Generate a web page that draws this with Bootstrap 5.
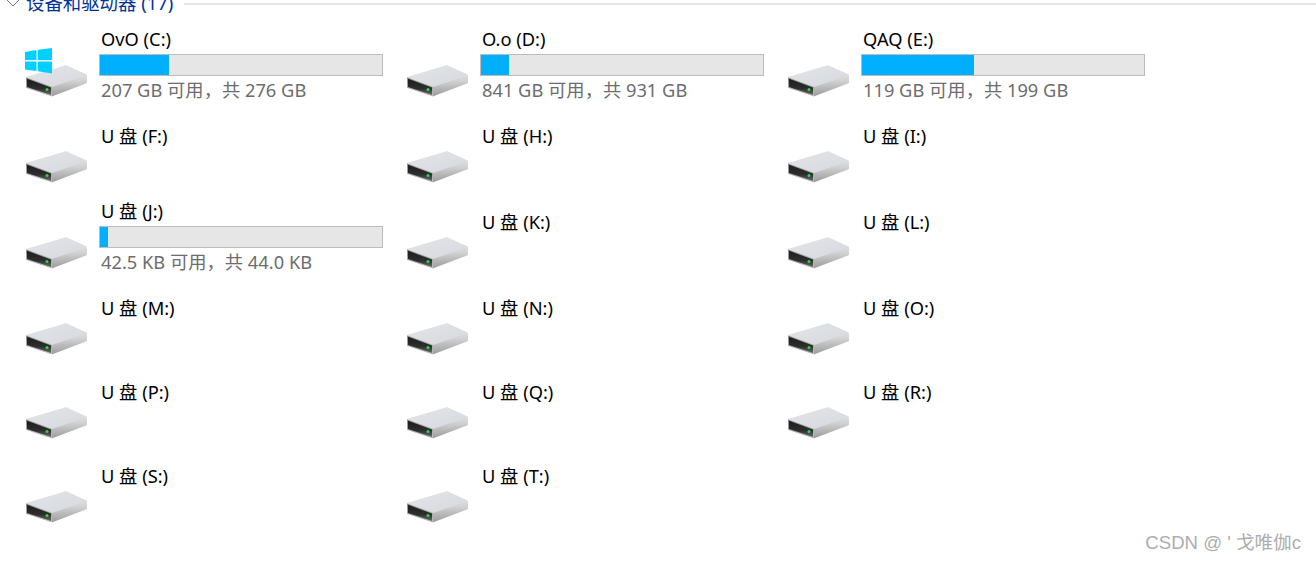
<!DOCTYPE html>
<html lang="zh-CN">
<head>
  <meta charset="UTF-8">
  <meta name="viewport" content="width=device-width,initial-scale=1">
  <title>设备和驱动器</title>
  <link href="https://cdn.jsdelivr.net/npm/bootstrap@5.3.0/dist/css/bootstrap.min.css" rel="stylesheet">
  <style>
    html, body { height: 100%; overflow: hidden; }
    body {
      background: #fff;
      color: #000;
      font-family: "Noto Sans", "Noto Sans CJK SC", sans-serif;
    }
    .group-head {
      height: 26px;
      margin-top: -10px;
      padding-left: 6px;
      color: #003399;
      font-size: 18.4px;
      line-height: 26px;
    }
    .group-head svg { width: 14px; height: 8px; margin-right: 6px; flex: none; }
    .group-rule { height: 2px; background: #e6e6e6; margin-left: 11px; margin-top: 1px; }
    .drive-grid {
      grid-template-columns: repeat(3, 381px);
      grid-template-rows: 86px 86px 86px 84px 84px 84px;
      margin-top: 10px;
    }
    .drive-tile { padding-left: 25px; }
    .drive-icon { width: 68px; height: 58px; margin-top: 13px; margin-right: -6px; flex: none; }
    .drive-text { width: 284px; margin-left: 12px; flex: none; }
    .drive-name {
      margin-left: 2px;
      font-size: 18.3px;
      line-height: 26px;
      white-space: nowrap;
    }
    .drive-tile.plain .drive-name { margin-top: 11px; }
    .drive-bar {
      height: 22px;
      margin-top: 2px;
      border: 1px solid #bcbcbc;
      border-radius: 0;
      background: #e6e6e6;
    }
    .drive-bar .progress-bar { background: #00b0ff; }
    .drive-free {
      margin: 1px 0 0 2px;
      color: #6d6d6d;
      font-size: 18.3px;
      line-height: 26px;
      white-space: nowrap;
    }
    .win-logo { left: 25px; top: 22px; z-index: 1; }
    .watermark {
      position: absolute;
      right: 15px;
      top: 531px;
      color: #adadad;
      font-family: "Liberation Sans", "Noto Sans CJK SC", sans-serif;
      font-size: 18.6px;
      line-height: 24px;
    }
  </style>
</head>
<body>

  <svg width="0" height="0" class="position-absolute">
    <defs>
      <linearGradient id="sideGrad" x1="0" y1="0" x2="0" y2="1">
        <stop offset="0" stop-color="#f0f0f0"/>
        <stop offset="0.5" stop-color="#d2d2d2"/>
        <stop offset="1" stop-color="#9c9c9c"/>
      </linearGradient>
      <linearGradient id="topGrad" x1="0" y1="0" x2="1" y2="1">
        <stop offset="0" stop-color="#e3e5e9"/>
        <stop offset="1" stop-color="#d5d8dd"/>
      </linearGradient>
      <linearGradient id="rimGrad" x1="0" y1="0" x2="0" y2="1">
        <stop offset="0" stop-color="#8a8a8a"/>
        <stop offset="1" stop-color="#c4c4c4"/>
      </linearGradient>
      <linearGradient id="faceGrad" x1="0" y1="0" x2="0" y2="1">
        <stop offset="0" stop-color="#1c1c1c"/>
        <stop offset="0.6" stop-color="#2e2e2e"/>
        <stop offset="1" stop-color="#6a6a6a"/>
      </linearGradient>
      <symbol id="hdd" viewBox="0 0 68 32">
        <path d="M1.5 12 L40 .5 Q41 0 42 .5 L61.5 9.5 Q62 10 62 11 L62 17 Q62 18 61 18.5 L28 31 Q27 31.500 26 31 L1.500 23 Q1 22.500 1 22 L1 13 Q1 12.500 1.500 12Z" fill="url(#sideGrad)"/>
        <polygon points="1.500,12 41,.3 62,10 27,22" fill="url(#topGrad)"/>
        <polygon points="1,12.500 27,22 27,31.300 1,22.500" fill="url(#rimGrad)"/>
        <polygon points="2,13.800 26,22.600 26,30 2,22" fill="url(#faceGrad)"/>
        <circle cx="22" cy="24.500" r="1.500" fill="#1fe03f"/>
      </symbol>
    </defs>
  </svg>

  <!-- Заголовок групи -->
  <div class="group-head d-flex align-items-center">
    <svg viewBox="0 0 14 8"><path d="M1 1l6 6 6-6" fill="none" stroke="#7a7a7a"/></svg>
    <span>设备和驱动器 (17)</span>
    <div class="group-rule flex-grow-1"></div>
  </div>

  <div class="drive-grid d-grid">
    <!-- C: системний, з логотипом -->
    <div class="drive-tile d-flex position-relative">
      <svg class="position-absolute win-logo" width="27" height="26" viewBox="0 0 27 26">
        <polygon points="0,4 11.5,2 11.5,12 0,12" fill="#00d0ff"/>
        <polygon points="13,1.8 27,0 27,12 13,12" fill="#00d0ff"/>
        <polygon points="0,13.5 11.5,13.5 11.5,23 0,21.5" fill="#00d0ff"/>
        <polygon points="13,13.5 27,13.5 27,25.5 13,23.3" fill="#00d0ff"/>
      </svg>
      <svg class="drive-icon"><use href="#hdd" y="26" width="68" height="32"/></svg>
      <div class="drive-text">
        <div class="drive-name">OvO (C:)</div>
        <div class="progress drive-bar"><div class="progress-bar" style="width:24.5%"></div></div>
        <div class="drive-free">207 GB 可用，共 276 GB</div>
      </div>
    </div>
    <div class="drive-tile d-flex">
      <svg class="drive-icon"><use href="#hdd" y="26" width="68" height="32"/></svg>
      <div class="drive-text">
        <div class="drive-name">O.o (D:)</div>
        <div class="progress drive-bar"><div class="progress-bar" style="width:10%"></div></div>
        <div class="drive-free">841 GB 可用，共 931 GB</div>
      </div>
    </div>
    <div class="drive-tile d-flex">
      <svg class="drive-icon"><use href="#hdd" y="26" width="68" height="32"/></svg>
      <div class="drive-text">
        <div class="drive-name">QAQ (E:)</div>
        <div class="progress drive-bar"><div class="progress-bar" style="width:39.8%"></div></div>
        <div class="drive-free">119 GB 可用，共 199 GB</div>
      </div>
    </div>

    <div class="drive-tile plain d-flex"><svg class="drive-icon"><use href="#hdd" y="26" width="68" height="32"/></svg><div class="drive-text"><div class="drive-name">U 盘 (F:)</div></div></div>
    <div class="drive-tile plain d-flex"><svg class="drive-icon"><use href="#hdd" y="26" width="68" height="32"/></svg><div class="drive-text"><div class="drive-name">U 盘 (H:)</div></div></div>
    <div class="drive-tile plain d-flex"><svg class="drive-icon"><use href="#hdd" y="26" width="68" height="32"/></svg><div class="drive-text"><div class="drive-name">U 盘 (I:)</div></div></div>

    <div class="drive-tile d-flex">
      <svg class="drive-icon"><use href="#hdd" y="26" width="68" height="32"/></svg>
      <div class="drive-text">
        <div class="drive-name">U 盘 (J:)</div>
        <div class="progress drive-bar"><div class="progress-bar" style="width:2.9%"></div></div>
        <div class="drive-free">42.5 KB 可用，共 44.0 KB</div>
      </div>
    </div>
    <div class="drive-tile plain d-flex"><svg class="drive-icon"><use href="#hdd" y="26" width="68" height="32"/></svg><div class="drive-text"><div class="drive-name">U 盘 (K:)</div></div></div>
    <div class="drive-tile plain d-flex"><svg class="drive-icon"><use href="#hdd" y="26" width="68" height="32"/></svg><div class="drive-text"><div class="drive-name">U 盘 (L:)</div></div></div>

    <div class="drive-tile plain d-flex"><svg class="drive-icon"><use href="#hdd" y="26" width="68" height="32"/></svg><div class="drive-text"><div class="drive-name">U 盘 (M:)</div></div></div>
    <div class="drive-tile plain d-flex"><svg class="drive-icon"><use href="#hdd" y="26" width="68" height="32"/></svg><div class="drive-text"><div class="drive-name">U 盘 (N:)</div></div></div>
    <div class="drive-tile plain d-flex"><svg class="drive-icon"><use href="#hdd" y="26" width="68" height="32"/></svg><div class="drive-text"><div class="drive-name">U 盘 (O:)</div></div></div>

    <div class="drive-tile plain d-flex"><svg class="drive-icon"><use href="#hdd" y="26" width="68" height="32"/></svg><div class="drive-text"><div class="drive-name">U 盘 (P:)</div></div></div>
    <div class="drive-tile plain d-flex"><svg class="drive-icon"><use href="#hdd" y="26" width="68" height="32"/></svg><div class="drive-text"><div class="drive-name">U 盘 (Q:)</div></div></div>
    <div class="drive-tile plain d-flex"><svg class="drive-icon"><use href="#hdd" y="26" width="68" height="32"/></svg><div class="drive-text"><div class="drive-name">U 盘 (R:)</div></div></div>

    <div class="drive-tile plain d-flex"><svg class="drive-icon"><use href="#hdd" y="26" width="68" height="32"/></svg><div class="drive-text"><div class="drive-name">U 盘 (S:)</div></div></div>
    <div class="drive-tile plain d-flex"><svg class="drive-icon"><use href="#hdd" y="26" width="68" height="32"/></svg><div class="drive-text"><div class="drive-name">U 盘 (T:)</div></div></div>
  </div>

  <div class="watermark">CSDN @ ' 戈唯伽c</div>

  <script src="https://cdn.jsdelivr.net/npm/bootstrap@5.3.0/dist/js/bootstrap.bundle.min.js"></script>
</body>
</html>
